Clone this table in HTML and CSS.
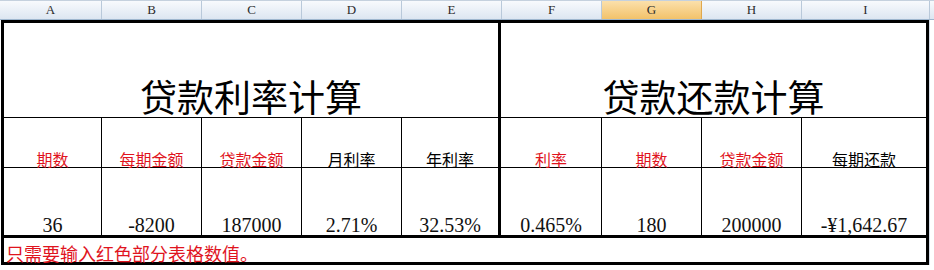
FILE: index.html
```html
<!DOCTYPE html>
<html lang="zh-CN">
<head>
<meta charset="utf-8">
<title>贷款计算</title>
<link rel="stylesheet" href="styles.css">
</head>
<body>
<div class="colhdr">
  <div class="ch w-a">A</div>
  <div class="ch w">B</div>
  <div class="ch w">C</div>
  <div class="ch w">D</div>
  <div class="ch w">E</div>
  <div class="ch w">F</div>
  <div class="ch w sel">G</div>
  <div class="ch w">H</div>
  <div class="ch w-i">I</div>
  <div class="ch j"></div>
</div>
<div class="area">
  <div class="sheet">
    <div class="c title left tk-r">贷款利率计算</div>
    <div class="c title right tk-r">贷款还款计算</div>

    <div class="c lab red">期数</div>
    <div class="c lab red">每期金额</div>
    <div class="c lab red">贷款金额</div>
    <div class="c lab">月利率</div>
    <div class="c lab tk-r">年利率</div>
    <div class="c lab red">利率</div>
    <div class="c lab red">期数</div>
    <div class="c lab red">贷款金额</div>
    <div class="c lab tk-r">每期还款</div>

    <div class="c num tk-b">36</div>
    <div class="c num tk-b">-8200</div>
    <div class="c num tk-b">187000</div>
    <div class="c num tk-b">2.71%</div>
    <div class="c num tk-b tk-r">32.53%</div>
    <div class="c num tk-b">0.465%</div>
    <div class="c num tk-b">180</div>
    <div class="c num tk-b">200000</div>
    <div class="c num tk-b tk-r">-¥1,642.67</div>

    <div class="c note red tk-b tk-r">只需要输入红色部分表格数值。</div>
  </div>
  <div class="rest"></div>
</div>
</body>
</html>
```

FILE: styles.css
```css
html, body {
  margin: 0;
  padding: 0;
  background: #ffffff;
}

body {
  width: 934px;
  height: 270px;
  overflow: hidden;
}

.colhdr {
  display: flex;
  height: 20px;
  box-sizing: border-box;
  border-top: 1px solid #c5d1de;
  border-bottom: 1px solid #9eb6ce;
  background: linear-gradient(#f8fafd, #dde6f1);
}

.ch {
  box-sizing: border-box;
  border-right: 1px solid #b9c9da;
  display: flex;
  align-items: center;
  justify-content: center;
  font-family: "Liberation Serif", serif;
  font-size: 13px;
  color: #2b2b2b;
}

.w-a { width: 102px; }
.w { width: 100px; }
.w-i { width: 128px; }
.j { flex: 1; border-right: none; }

.sel {
  background: linear-gradient(#fbe0ab, #f2c26a);
  border-right-color: #e0a84e;
}

.area {
  display: flex;
  align-items: flex-start;
}

.sheet {
  margin-left: 1px;
  display: grid;
  grid-template-columns: 98px 100px 100px 100px 99px 101px 100px 100px 127px;
  grid-template-rows: 95px 50px 70px 27px;
  border-top: 3px solid #000;
  border-left: 3px solid #000;
}

.c {
  box-sizing: border-box;
  border-right: 1px solid #000;
  border-bottom: 1px solid #000;
  display: flex;
  align-items: flex-end;
  justify-content: center;
  color: #000;
  white-space: nowrap;
  line-height: 1;
}

.tk-r { border-right-width: 3px; }
.tk-b { border-bottom-width: 3px; }

.title {
  font-family: "Noto Sans CJK SC", sans-serif;
  font-size: 37px;
  padding-bottom: 2px;
}

.title.left { grid-column: 1 / span 5; }
.title.right { grid-column: 6 / span 4; }

.lab {
  font-family: "Noto Sans CJK SC", sans-serif;
  font-size: 16px;
}

.num {
  font-family: "Liberation Serif", serif;
  font-size: 20px;
  color: #111;
}

.note {
  grid-column: 1 / -1;
  justify-content: flex-start;
  padding-left: 2px;
  font-family: "Noto Sans CJK SC", sans-serif;
  font-size: 18px;
}

.red { color: #e0141e; }

.rest {
  flex: 1;
  height: 245px;
  border-left: 1px solid #d4dbe6;
}
```
